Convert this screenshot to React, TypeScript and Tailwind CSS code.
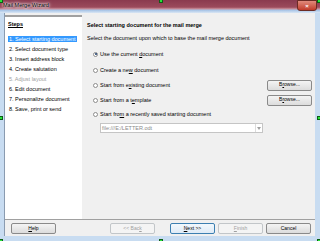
import React from 'react';

const font = { fontFamily: '"Liberation Sans", Arial, sans-serif' };

function Handle({ className }: { className: string }) {
  return <div className={`absolute w-[4px] h-[4px] bg-[#27e33a] border border-[#0c5e14] ${className}`} />;
}

function Radio({ checked }: { checked?: boolean }) {
  return (
    <div className="w-[5px] h-[5px] rounded-full border border-[#8d8d8d] bg-white flex items-center justify-center shrink-0">
      {checked && <div className="w-[2px] h-[2px] rounded-full bg-[#1e3c6a]" />}
    </div>
  );
}

function Button({ children, disabled, primary, className = '' }: { children: React.ReactNode; disabled?: boolean; primary?: boolean; className?: string }) {
  let look = 'border-[#8a8a8a] bg-gradient-to-b from-[#f4f4f4] to-[#dcdcdc] text-black';
  if (disabled) look = 'border-[#c2c6c9] bg-[#f4f4f4] text-[#a0a0a0]';
  if (primary) look = 'border-[#3c7fb1] bg-gradient-to-b from-[#f2f8fd] to-[#dfebf6] text-black';
  return (
    <div className={`h-[11px] w-[45px] rounded-[2px] border flex items-center justify-center text-[5px] ${look} ${className}`}>
      {children}
    </div>
  );
}

const steps = [
  '1. Select starting document',
  '2. Select document type',
  '3. Insert address block',
  '4. Create salutation',
  '5. Adjust layout',
  '6. Edit document',
  '7. Personalize document',
  '8. Save, print or send',
];

export default function App() {
  return (
    <div className="relative w-[320px] h-[241px] overflow-hidden bg-[#c8dcf1] flex flex-col" style={font}>
      {/* Title bar */}
      <div className="h-[13px] shrink-0 flex items-start justify-between bg-[linear-gradient(to_bottom,#8a3a4f_0%,#9b4a5c_55%,#c78d99_68%,#a6c3e6_78%,#dbe7f4_100%)]">
        <span className="ml-[3px] mt-[2px] text-[5.5px] leading-[7px] text-black [text-shadow:0_0_2px_#ffffff,0_0_3px_#ffffff,0_0_4px_#ffffff]">Mail Merge Wizard</span>
        <div className="mr-[3px] w-[20px] h-[11px] rounded-b-[3px] border border-[#6b2b24] bg-gradient-to-b from-[#e08a7c] to-[#c13a2a] flex items-center justify-center">
          <span className="text-[6px] leading-none font-bold text-white">×</span>
        </div>
      </div>

      {/* Client area */}
      <div className="flex-1 flex flex-col mx-[4px] mr-[5px] bg-[#f0f0f0] border-l border-[#8a9bb0]">
        <div className="flex-1 flex pt-[2px]">
          {/* Steps panel */}
          <div className="w-[77px] bg-white border-t-2 border-[#a0a0a0] flex flex-col pl-[3px] pt-[2px]">
            <div className="h-[10px] flex items-center text-[5.5px] font-bold underline">Steps</div>
            <div className="mt-[5px] flex flex-col">
              {steps.map((s, i) => (
                <div key={s} className="h-[10px] flex items-center">
                  <span
                    className={`text-[5.5px] leading-[6px] px-[1px] ${
                      i === 0 ? 'bg-[#3399ff] text-white' : i === 4 ? 'text-[#a0a0a0]' : 'text-black'
                    }`}
                  >
                    {s}
                  </span>
                </div>
              ))}
            </div>
          </div>

          {/* Page */}
          <div className="flex-1 flex flex-col pl-[5px] pt-[5px] text-[5.5px] text-black">
            <div className="h-[10px] flex items-center font-bold">Select starting document for the mail merge</div>
            <div className="mt-[3px] h-[10px] flex items-center">Select the document upon which to base the mail merge document</div>
            <div className="mt-[6px] ml-[6px] flex flex-col">
              <div className="h-[10px] flex items-center gap-[2px]">
                <Radio checked />
                <span>Use the current <u>d</u>ocument</span>
              </div>
              <div className="mt-[6px] h-[10px] flex items-center gap-[2px]">
                <Radio />
                <span>Create a ne<u>w</u> document</span>
              </div>
              <div className="mt-[5px] h-[10px] flex items-center gap-[2px]">
                <Radio />
                <span className="flex-1">Start from e<u>x</u>isting document</span>
                <Button className="mr-[3px]">B<u>r</u>owse...</Button>
              </div>
              <div className="mt-[5px] h-[10px] flex items-center gap-[2px]">
                <Radio />
                <span className="flex-1">Start from a t<u>e</u>mplate</span>
                <Button className="mr-[3px]">B<u>r</u>owse...</Button>
              </div>
              <div className="mt-[4px] h-[10px] flex items-center gap-[2px]">
                <Radio />
                <span>Start fro<u>m</u> a recently saved starting document</span>
              </div>
              <div className="ml-[7px] mt-[4px] w-[163px] h-[10px] border border-[#c5c5c5] bg-white flex items-center justify-between">
                <span className="pl-[1px] text-[#8a8a8a]">file:///E:/LETTER.odt</span>
                <div className="w-[7px] h-full border-l border-[#dcdcdc] flex items-center justify-center">
                  <svg width="4" height="3" viewBox="0 0 4 3">
                    <path d="M0 0 L4 0 L2 3 Z" fill="#a0a0a0" />
                  </svg>
                </div>
              </div>
            </div>
          </div>
        </div>

        {/* Bottom buttons */}
        <div className="h-[17px] shrink-0 border-t border-[#a0a0a0] flex items-center pl-[6px] pr-[4px] pt-[1px]">
          <Button><u>H</u>elp</Button>
          <div className="flex-1" />
          <div className="flex items-center gap-[3px]">
            <Button disabled className="w-[33px]">&lt;&lt; Bac<u>k</u></Button>
            <Button primary className="ml-[12px]"><u>N</u>ext &gt;&gt;</Button>
            <Button disabled><u>F</u>inish</Button>
            <Button>Cancel</Button>
          </div>
        </div>
      </div>
      <div className="h-[5px] shrink-0" />

      <Handle className="left-[-1px] top-[-1px]" />
      <Handle className="left-[159px] top-[-1px]" />
      <Handle className="right-[-1px] top-[-1px]" />
      <Handle className="left-[-1px] top-[116px]" />
      <Handle className="right-[-1px] top-[116px]" />
      <Handle className="left-[-1px] bottom-[-2px]" />
      <Handle className="left-[159px] bottom-[-2px]" />
      <Handle className="right-[-1px] bottom-[-2px]" />
    </div>
  );
}
